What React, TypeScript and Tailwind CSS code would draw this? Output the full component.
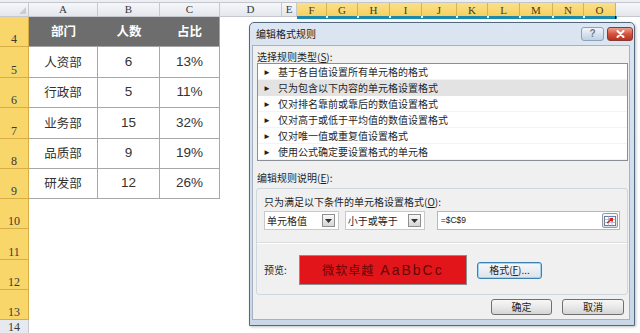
import React from 'react';

const CJK = "font-['Noto_Sans_CJK_SC',sans-serif]";

function ColHead({ l }: { l: string }) {
  return (
    <div className="flex items-center justify-center bg-gradient-to-b from-[#f5f7fa] to-[#e3e7ec] border-r border-b border-[#c5c9cf] text-[11px] leading-none text-[#3a3a3a] font-['Liberation_Serif',serif]">
      {l}
    </div>
  );
}

function SelHead({ l }: { l: string }) {
  return (
    <div className="flex items-center justify-center bg-gradient-to-b from-[#fbe08a] to-[#f6cf5c] border-r border-[#d8b04c] text-[11px] leading-none text-[#4a3b12] font-['Liberation_Serif',serif]">
      {l}
    </div>
  );
}

function RowHead({ n, gray }: { n: number; gray?: boolean }) {
  return (
    <div
      className={
        gray
          ? "flex items-end justify-center pb-[0px] bg-[#e6e9ee] border-r border-[#c5c9cf] text-[12px] leading-none text-[#3a3a3a] font-['Liberation_Serif',serif]"
          : "flex items-end justify-center pb-[1px] bg-[#f9d669] border-r border-b border-[#d6ae45] text-[12px] leading-none text-[#3a3a3a] font-['Liberation_Serif',serif]"
      }
    >
      {n}
    </div>
  );
}

function Combo({ label, w }: { label: string; w: string }) {
  return (
    <div className={`${w} h-[19px] bg-white border border-[#c9c9c9] flex items-center pl-[2px] pr-[3px]`}>
      <span className={`${CJK} text-[10px] leading-none text-[#1f1f1f]`}>{label}</span>
      <div className="ml-auto w-[13px] h-[13px] border border-[#8f8f8f] bg-gradient-to-b from-[#fafafa] to-[#d5d5d5] flex items-center justify-center">
        <svg width="7" height="4" viewBox="0 0 7 4">
          <path d="M0 0 L7 0 L3.5 4 Z" fill="#333" />
        </svg>
      </div>
    </div>
  );
}

export default function App() {
  const cols = ['A', 'B', 'C', 'D', 'E'];
  const sel = ['F', 'G', 'H', 'I', 'J', 'K', 'L', 'M', 'N', 'O'];
  const data = [
    ['人资部', '6', '13%'],
    ['行政部', '5', '11%'],
    ['业务部', '15', '32%'],
    ['品质部', '9', '19%'],
    ['研发部', '12', '26%'],
  ];
  const items = [
    '基于各自值设置所有单元格的格式',
    '只为包含以下内容的单元格设置格式',
    '仅对排名靠前或靠后的数值设置格式',
    '仅对高于或低于平均值的数值设置格式',
    '仅对唯一值或重复值设置格式',
    '使用公式确定要设置格式的单元格',
  ];

  return (
    <div className="relative w-[640px] h-[333px] overflow-hidden bg-white">
      <div className="grid grid-cols-[29px_69px_62px_60px_62px_15px_30px_31px_32px_32px_35px_31px_32px_33px_31px_32px_1fr] grid-rows-[3px_14px_30px_31px_30px_31px_30px_30px_30px_31px_30px_30px_13px] w-[640px] h-[333px]">
        <div className="col-span-full bg-[#eceef1] border-b border-[#c3c7cd]" />
        <div className="flex items-end justify-end pr-[2px] pb-[2px] bg-gradient-to-b from-[#f5f7fa] to-[#e3e7ec] border-r border-b border-[#c5c9cf]">
          <svg width="7" height="7" viewBox="0 0 7 7">
            <path d="M7 0 L7 7 L0 7 Z" fill="#c9cdd3" />
          </svg>
        </div>
        {cols.map((c) => (
          <ColHead key={c} l={c} />
        ))}
        {sel.map((c) => (
          <SelHead key={c} l={c} />
        ))}
        <div className="bg-gradient-to-b from-[#f5f7fa] to-[#e3e7ec] border-b border-[#c5c9cf]" />

        <RowHead n={4} />
        {['部门', '人数', '占比'].map((t, i) => (
          <div
            key={t}
            className={
              i === 2
                ? `flex items-center justify-center bg-[#6d6d6d] border-r border-b border-[#a4a4a4] text-white font-bold text-[12.5px] ${CJK}`
                : `flex items-center justify-center bg-[#6d6d6d] border-b border-[#a4a4a4] text-white font-bold text-[12.5px] ${CJK}`
            }
          >
            {t}
          </div>
        ))}
        <div className="col-span-13 bg-white" />

        {data.map((r, ri) => (
          <React.Fragment key={ri}>
            <RowHead n={5 + ri} />
            <div className={`flex items-center justify-center bg-white border-r border-b border-[#a8a8a8] text-[12.5px] text-[#333] ${CJK}`}>
              {r[0]}
            </div>
            <div className="flex items-center justify-center bg-white border-r border-b border-[#a8a8a8] text-[13.5px] text-[#333] font-['Liberation_Sans',sans-serif]">
              {r[1]}
            </div>
            <div className="flex items-center justify-center bg-white border-r border-b border-[#a8a8a8] text-[13.5px] text-[#333] font-['Liberation_Sans',sans-serif]">
              {r[2]}
            </div>
            <div className="col-span-13 bg-white" />
          </React.Fragment>
        ))}

        {[10, 11, 12, 13].map((n) => (
          <React.Fragment key={n}>
            <RowHead n={n} />
            <div className="col-span-16 bg-white" />
          </React.Fragment>
        ))}
        <RowHead n={14} gray />
        <div className="col-span-16 bg-white" />
      </div>

      {/* selection border under selected headers */}
      <div className="absolute left-[297px] top-[16px] w-[320px] h-[3px] bg-[#1c8aab] grid grid-cols-[30px_31px_32px_32px_35px_31px_32px_33px_31px_31px_1px]">
        {[0, 1, 2, 3, 4, 5, 6, 7, 8, 9].map((i) => (
          <div key={i} className="flex justify-end items-start">
            {i < 9 ? <span className="w-[2px] h-[2px] bg-[#dff3fa] -mr-px" /> : null}
          </div>
        ))}
        <div className="bg-black" />
      </div>

      {/* dialog */}
      <div className="absolute left-[249px] top-[22px] w-[386px] h-[304px] border border-[#53697f] rounded-t-[5px] bg-gradient-to-b from-[#dce6f2] to-[#c9d7e6] flex flex-col shadow-[1px_1px_3px_rgba(0,0,0,0.25)]">
        <div className="h-[22px] flex items-center pl-[6px] pr-[1px]">
          <span className={`${CJK} text-[10px] leading-none text-[#1a1a1a]`}>编辑格式规则</span>
          <div className="ml-auto flex items-center gap-[3px]">
            <div className="w-[23px] h-[14px] rounded-[3px] border border-[#8da2b8] bg-gradient-to-b from-[#f1f5fa] to-[#bfd0e3] flex items-center justify-center">
              <span className="text-[10px] font-bold leading-none text-[#6a7d92] font-['Liberation_Sans',sans-serif]">?</span>
            </div>
            <div className="w-[26px] h-[14px] rounded-[3px] border border-[#8a3a30] bg-gradient-to-b from-[#eaa090] via-[#d4533f] to-[#b9301f] flex items-center justify-center">
              <svg width="9" height="8" viewBox="0 0 9 8">
                <path d="M1.5 1 L7.5 7 M7.5 1 L1.5 7" stroke="white" strokeWidth="2" strokeLinecap="round" />
              </svg>
            </div>
          </div>
        </div>

        <div className="flex-1 ml-[2px] mr-[4px] mb-[5px] bg-[#f0f0f0] border border-[#a3b3c4] pl-[4px] pr-[1px] pt-[4px] flex flex-col">
          <div className={`${CJK} h-[13px] flex items-center text-[10px] leading-none text-[#1f1f1f]`}>
            选择规则类型(<span className="underline">S</span>):
          </div>
          <div className="h-[98px] bg-white border border-[#8a8f96] flex flex-col">
            {items.map((t, i) => (
              <div
                key={t}
                className={
                  i === 1
                    ? 'h-[16px] flex items-center pl-[5px] bg-[#e3e3e3]'
                    : 'h-[16px] flex items-center pl-[5px] border-b border-[#f3f3f3]'
                }
              >
                <span className="w-[15px] text-[8px] leading-none text-[#222]">►</span>
                <span className={`${CJK} text-[10px] leading-none text-[#1f1f1f]`}>{t}</span>
              </div>
            ))}
          </div>
          <div className={`${CJK} mt-[10px] h-[14px] flex items-center text-[10px] leading-none text-[#1f1f1f]`}>
            编辑规则说明(<span className="underline">E</span>):
          </div>
          <div className="mt-[3px] -ml-px h-[107px] border border-[#cfd7de] rounded-[3px] px-[7px] pt-[6px] flex flex-col">
            <div className={`${CJK} h-[14px] flex items-center text-[10px] leading-none text-[#1f1f1f]`}>
              只为满足以下条件的单元格设置格式(<span className="underline">O</span>):
            </div>
            <div className="mt-[2px] h-[19px] flex items-center">
              <Combo label="单元格值" w="w-[75px]" />
              <div className="ml-[6px]">
                <Combo label="小于或等于" w="w-[80px]" />
              </div>
              <div className="ml-[12px] w-[184px] h-[19px] bg-white border border-[#b5b8bd] flex items-center pl-[3px] pr-[1px]">
                <span className="text-[8.5px] leading-none text-[#222] font-['Liberation_Sans',sans-serif]">=$C$9</span>
                <div className="ml-auto w-[16px] h-[15px] border border-[#9a9a9a] rounded-[2px] bg-gradient-to-b from-[#f8f8f8] to-[#d9dde3] flex items-center justify-center">
                  <svg width="12" height="10" viewBox="0 0 12 10">
                    <rect x="0.5" y="0.5" width="11" height="9" fill="#ffffff" stroke="#5f7fa6" />
                    <path d="M0.5 3.5 H11.5 M0.5 6.5 H11.5 M4.5 0.5 V9.5 M8 0.5 V9.5" stroke="#9fb3cc" strokeWidth="0.8" />
                    <path d="M3 7 L8 3 M5.5 2.8 L8.2 2.8 L8.2 5.5" stroke="#d8231c" strokeWidth="1.6" fill="none" />
                  </svg>
                </div>
              </div>
            </div>
            <div className="mt-[12px] -mx-[7px] h-[2px] border-t border-[#dcdcdc] border-b border-b-white" />
            <div className="mt-[11px] h-[30px] flex items-center">
              <span className={`${CJK} w-[35px] text-[10px] leading-none text-[#1f1f1f]`}>预览:</span>
              <div className="w-[168px] h-[30px] bg-[#e2161a] border border-[#8e8e8e] flex items-center justify-center text-[#640606]">
                <span className={`${CJK} text-[12px] leading-none tracking-[1px]`}>微软卓越</span>
                <span className="ml-[6px] text-[14px] leading-none tracking-[2px] font-['Liberation_Sans',sans-serif]">AaBbCc</span>
              </div>
              <div className="ml-[10px] w-[65px] h-[17px] rounded-[3px] border border-[#3c7fb1] shadow-[inset_0_0_0_1px_#9fd3f0] bg-gradient-to-b from-[#f5f8fb] to-[#dde3ea] flex items-center justify-center">
                <span className={`${CJK} text-[10px] leading-none text-[#1f1f1f]`}>
                  格式(<span className="underline">F</span>)...
                </span>
              </div>
            </div>
          </div>
          <div className="mt-[4px] flex justify-end gap-[10px] pr-[4px]">
            <div className="w-[61px] h-[16px] rounded-[3px] border border-[#707070] bg-gradient-to-b from-[#f7f7f7] via-[#e9e9e9] to-[#d4d4d4] flex items-center justify-center">
              <span className={`${CJK} text-[10px] leading-none text-[#1f1f1f]`}>确定</span>
            </div>
            <div className="w-[62px] h-[16px] rounded-[3px] border border-[#707070] bg-gradient-to-b from-[#f7f7f7] via-[#e9e9e9] to-[#d4d4d4] flex items-center justify-center">
              <span className={`${CJK} text-[10px] leading-none text-[#1f1f1f]`}>取消</span>
            </div>
          </div>
        </div>
      </div>
    </div>
  );
}
